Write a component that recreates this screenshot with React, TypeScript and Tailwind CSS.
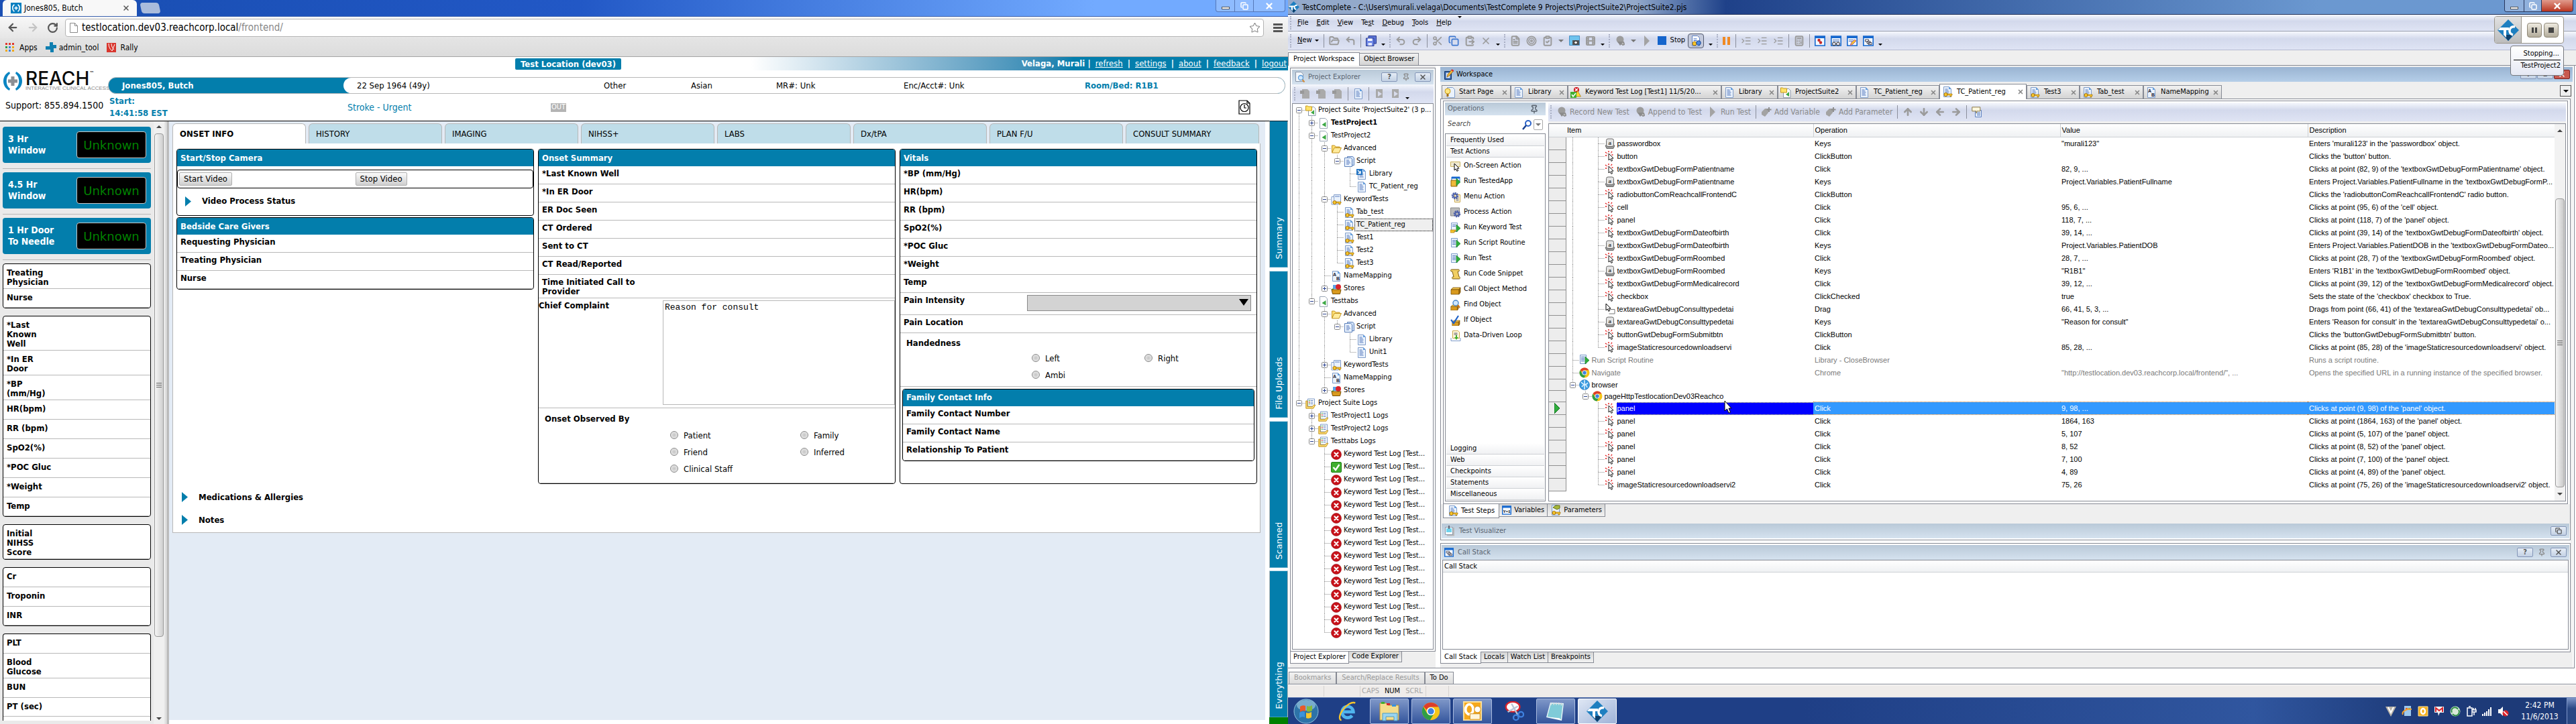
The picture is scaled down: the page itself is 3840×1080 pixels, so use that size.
import type { ReactNode } from "react";
import {
  ArrowDown, ArrowLeft, ArrowRight, ArrowUp, Calculator, ClipboardCheck, ClipboardPaste, Copy, CornerUpLeft, Film,
  FileText, FolderOpen, IndentIncrease, Pin, Redo2, RotateCw, Scissors, Star, Target, Undo2, X,
} from "lucide-react";

/* ---------- icons ---------- */

const page = (
  <>
    <path d="M2.5.5h8l3 3v12h-11z" fill="#eaf2fc" stroke="#7f9cc9" />
    <path d="M10 .5v3.5h3.5z" fill="#5b9be0" />
  </>
);
const lines = <path d="M4.5 4h4M4.5 6h5M4.5 8h6M4.5 10h5M4.5 12h6" stroke="#5c7fc0" />;
const key = (
  <>
    <circle cx="5.5" cy="12" r="2.6" fill="#f6c52c" stroke="#a87408" />
    <path d="M8 11h7v2h-1v2h-2v-2H8z" fill="#f6c52c" stroke="#a87408" strokeWidth=".7" />
  </>
);
const green = <path d="M9 3l6 5.5L9 14z" fill="#2fae3c" stroke="#0f7a1c" strokeWidth=".7" />;
const box = (
  <>
    <path d="M1 8l3-3h11l-2 3z" fill="#f4c64e" stroke="#7a5208" strokeWidth=".8" />
    <path d="M1 8h12v7H1z" fill="#d99a1e" stroke="#7a5208" strokeWidth=".8" />
    <path d="M13 8l2-3v7l-2 3z" fill="#a86f10" stroke="#7a5208" strokeWidth=".8" />
  </>
);
const gear = (
  <>
    <circle cx="7" cy="6" r="4" fill="none" stroke="#4a5ea8" strokeWidth="2.5" strokeDasharray="2 1" />
    <circle cx="7" cy="6" r="2.6" fill="none" stroke="#4a5ea8" strokeWidth="1.6" />
  </>
);
const blueWin = (
  <>
    <path d="M.8 1h14.4v14H.8z" fill="#f4f9ff" stroke="#1668cf" strokeWidth="1.6" />
    <path d="M.5 1h15v3H.5z" fill="#1668cf" />
  </>
);
const cursorArrow = "M6 4v10l2.3-2 1.6 3.4 1.8-.9-1.6-3.2 3-.3z";

const glyphs: Record<string, ReactNode> = {
  doc: <>{page}{lines}</>,
  key: <>{page}{lines}{key}</>,
  keys: <><path d="M1 3.5h10V15H1z" fill="#fff" stroke="#7f9cc9" /><path d="M4.5.5h10v12h-10z" fill="#eaf2fc" stroke="#7f9cc9" /><path d="M6 3h7" stroke="#5c7fc0" />{key}</>,
  script: <><path d="M5.5.5h8l2 2v11h-10z" fill="#cfe0f6" stroke="#5f82bb" /><path d="M1.5 2.5h9l2 2v11h-11z" fill="#eaf2fc" stroke="#5f82bb" /><path d="M4 6h4M4 8h5M4 10h6M4 12h4" stroke="#5c7fc0" /></>,
  lib: <>{page}{lines}<path d="M0 0h9v9H0z" fill="#2273c2" /><path d="M2 2l4 4M6 3v3.5H2.5" stroke="#fff" strokeWidth="1.3" /></>,
  project: <><path d="M2.5.5h8l3 3v12h-11z" fill="#fff" stroke="#9aa5b5" /><path d="M11.5 6v7.5l-6-3.5z" fill="#3da845" /></>,
  suite: <><path d="M4.5 2.5h8l2.5 2.5v10.5H4.5z" fill="#fff" stroke="#8a97aa" /><path d="M13 7v7l-5-3z" fill="#3da845" /><path d="M.5 1h3l1 1h5v6h-9z" fill="#ffe36a" stroke="#c69a1a" /></>,
  folder: <><path d="M1.5 13.5V3h4l1.5 2h6v2" fill="#ffdf75" stroke="#c29422" /><path d="M1.5 14L5 6.5h10.5L12 14z" fill="#ffeb9c" stroke="#c29422" /></>,
  nm: <>{page}<text x="3" y="8" fontSize="7" fontWeight="700" fill="#223" fontFamily="Liberation Sans">A</text><text x="8" y="14" fontSize="7" fontWeight="700" fill="#223" fontFamily="Liberation Sans">B</text></>,
  store: <><path d="M3 2h8v6H3z" fill="#5ca2e8" /><circle cx="11" cy="5" r="4" fill="#d9232b" /><path d="M0 9h4V7l-3 1z" fill="#4ab04f" /><path d="M1 9h14l-1.5 6.5h-11z" fill="#d99a1e" stroke="#7a5208" /></>,
  logs: <><path d="M3.5 1h10v11h-10z" fill="#fff" stroke="#7f9cc9" /><path d="M7.5 3.5h4M7.5 6h4M7.5 8.5h4" stroke="#5c7fc0" /><path d="M5 3.5h1.5M5 8.5h1.5" stroke="#3da845" strokeWidth="1.5" /><path d="M5 6h1.5" stroke="#d9232b" strokeWidth="1.5" /><path d="M.8 4v11.2h11l3-5h-2.5l-2 2.5H3V4z" fill="#ffe07a" stroke="#c29422" /></>,
  err: <><circle cx="8" cy="8" r="7.5" fill="#c8121a" stroke="#8f0a10" strokeWidth=".6" /><path d="M5.5 5.5l5 5M10.500 5.500l-5 5" stroke="#fff" strokeWidth="2.2" strokeLinecap="round" /></>,
  ok: <><rect x=".5" y=".5" width="15" height="15" rx="1.5" fill="#3fae2e" stroke="#1f7f14" /><path d="M3.5 8l3.5 4 5.5-8" stroke="#fff" strokeWidth="2.4" /></>,
  logTab: <><circle cx="9" cy="4" r="4" fill="#d1131c" /><path d="M7 2l4 4M11 2L7 6" stroke="#fff" strokeWidth="1.4" /><path d="M10.5 5l5 9h-8z" fill="#ffd92e" stroke="#a87408" strokeWidth=".7" /><path d="M0 7h9v9H0z" fill="#3fae2e" /><path d="M2 11l2 3 4-5" stroke="#fff" strokeWidth="1.6" /></>,
  bulb: <><path d="M4.5.5h8l3 3v12h-11z" fill="#eaf2fc" stroke="#7f9cc9" /><circle cx="5" cy="6" r="4" fill="#ffe680" stroke="#c69a1a" /><path d="M3.5 10h3v4h-3z" fill="#a86f10" /></>,
  keycap: <><path d="M1 11l2 4.500h10l2-4.500z" fill="#9a9a9a" stroke="#6b6b6b" /><rect x="2.5" y="1" width="11" height="11.500" rx="2.500" fill="#e4e4e4" stroke="#6b6b6b" /><text x="5.5" y="10" fontSize="9" fontWeight="700" fill="#444" fontFamily="Liberation Serif">a</text></>,
  click: <><path d="M1 2l3 2M6 0v3M11 1L9 3.500M1 7h3M10.500 6H13" stroke="#e01b1b" strokeWidth="1.4" strokeDasharray="2 .8" /><path d={cursorArrow} fill="#fff" stroke="#000" strokeWidth=".9" /></>,
  drag: <><path d="M8 8.5h7V15H6.500" fill="#fff" stroke="#777" /><path d="M2 0v10l2.300-2 1.600 3.400 1.800-.9-1.600-3.200 3-.3z" fill="#fff" stroke="#000" /></>,
  runDoc: <><path d="M1.5.5h9v13h-9z" fill="#eaf2fc" stroke="#7f9cc9" /><path d="M3 3.5h5M3 5.5h5M3 7.5h5M3 9.5h5" stroke="#5c7fc0" />{green}</>,
  runKey: <><path d="M1.5.5h9v13h-9z" fill="#eaf2fc" stroke="#7f9cc9" /><path d="M3 3.5h5M3 5.5h5" stroke="#5c7fc0" />{green}<path d="M0 11h8v2H6v2H0z" fill="#f6c52c" stroke="#a87408" strokeWidth=".7" /></>,
  screen: <><path d="M.5 1.5h14v7H.5z" fill="#efe9d0" stroke="#c9b25c" /><path d={cursorArrow} fill="#fff" stroke="#000" /></>,
  app: <><path d="M2 1h12v6H2z" fill="#fff" stroke="#1668cf" /><path d="M2 1h12v2.5H2z" fill="#1668cf" /><path d="M1 6h9v9H1z" fill="#f0b93a" stroke="#8f6208" />{green}</>,
  menu: <><path d="M6.5 4.5h8v11h-8z" fill="#fff8de" stroke="#c9a64a" /><path d="M8.5 9h4M8.5 11h4M8.5 13h4" stroke="#667" />{gear}</>,
  process: <><path d="M.5 1h13v12H.5z" fill="#bbb" stroke="#888" /><g transform="translate(3 4)">{gear}</g></>,
  snippet: <path d="M2 1h10c2 0 2 3 0 3h-1l2 8c2 0 2 3 0 3H4c-2 0-2-3 0-3h1L3 4H2C0 4 0 1 2 1z" fill="#f1cf62" stroke="#7a5a10" />,
  box,
  find: <><g transform="translate(0 4) scale(.8)">{box}</g><circle cx="8" cy="5" r="4" fill="#cfe8ff" stroke="#4b87c9" strokeWidth="1.4" /><path d="M11 8l3 4" stroke="#c9761a" strokeWidth="2.2" /></>,
  ifobj: <><g transform="translate(2 4) scale(.8)">{box}</g><path d="M1 7l4 5 7-11" stroke="#1f62c8" strokeWidth="2.2" /></>,
  loop: <><path d="M3.5.5h8l2 2v9h-10z" fill="#fff8de" stroke="#c9a64a" /><path d="M5.5 4h5M5.5 6h5" stroke="#556" /><path d="M1 11v4.500h14V11" stroke="#7f9cc9" /><path d="M8 7v3H6l3 4 3-4h-2V7z" fill="#3fae2e" /></>,
  chrome: <><circle cx="8" cy="8" r="7.5" fill="#f5c518" /><path d="M8 .5a7.500 7.500 0 016.500 3.800H8a3.700 3.700 0 00-3.500 2.500L1.700 4A7.500 7.500 0 018 .5z" fill="#dd3d2c" /><path d="M1.500 4.200A7.500 7.500 0 007.300 15.500l3-5A3.600 3.600 0 014.700 9.600z" fill="#2f9e46" /><circle cx="8" cy="8" r="3.5" fill="#fff" /><circle cx="8" cy="8" r="2.7" fill="#3f82e0" /></>,
  globe: <><circle cx="8" cy="8" r="7.5" fill="#3a9be0" stroke="#1a62a8" strokeWidth=".6" /><path d="M3 4c3 4 7 5 10 1M4 11c3-4 6-5 8 1M8 1v14" stroke="#dff1ff" strokeWidth="1.5" /></>,
  camera: <><path d="M.5.5h15v14H.5z" fill="#6ec3ee" stroke="#4a90c4" /><path d="M5 7h10v7H5z" fill="#555" /><circle cx="10" cy="10.5" r="2.5" fill="#eee" stroke="#222" /></>,
  save: <><path d="M4 .5h11.500V12H4z" fill="#5b74d6" stroke="#28388f" /><path d="M.5 4H12v11.500H.5z" fill="#6f88e6" stroke="#28388f" /><path d="M3 4.500h6.500V8H3z" fill="#fff" /><path d="M3.500 11H9v4H3.500z" fill="#dfe6ff" /></>,
  toggle: <><path d="M2.5.5h8l3 3v12h-11z" fill="#fff" stroke="#5c7fc0" /><path d="M4.500 5h5M4.500 7.500h5" stroke="#2a62c8" /><circle cx="6" cy="12" r="3" fill="#f6c52c" stroke="#a87408" /><circle cx="12" cy="11" r="3.3" fill="#4a86dc" stroke="#1e4a94" /></>,
  winRed: <>{blueWin}<circle cx="6.5" cy="7" r="2.2" fill="#c62828" /><circle cx="9" cy="10.500" r="2.200" fill="#c62828" /></>,
  winBin: <>{blueWin}<path d="M3 6.500h10M3 8.500h10" stroke="#5c7fc0" /><circle cx="5" cy="12.500" r="2.500" fill="#dde" stroke="#222" /><circle cx="11" cy="12.500" r="2.500" fill="#dde" stroke="#222" /></>,
  winPen: <>{blueWin}<path d="M3 6.500h7M3 8.500h5" stroke="#5c7fc0" /><path d="M5 15l2-5 5-4 2 2-5 5z" fill="#f6c52c" stroke="#a85a98" /></>,
  winStack: <>{blueWin}<path d="M3.500 6h5v3h-5zM6 8.500h5v3H6zM8 10.500h5v3H8z" fill="#fff" stroke="#445" /></>,
  y1: <>{blueWin}<text x="2" y="12" fontSize="7" fontWeight="700" fill="#000" fontFamily="Liberation Mono">Y=1</text></>,
  param: <>{page}{key}<path d="M4 4l4-3h6v4l-4 2z" fill="#a8b83a" stroke="#667014" /></>,
  pen: <><path d="M2.500 3.500h10v12h-10z" fill="#2f5fa8" stroke="#173769" /><path d="M4.500 5.500h6v8h-6z" fill="#dfe9f8" /><path d="M6 12l1-4 6-7 2.500 2-6 7z" fill="#f0b93a" stroke="#7a4a08" strokeWidth=".7" /><path d="M13 1l2.500 2" stroke="#d9232b" strokeWidth="2" /></>,
  explorer: <><path d="M1.500.5h8l3 3v11h-11z" fill="#f4f7fb" stroke="#8a97aa" /><circle cx="9" cy="9" r="3.500" fill="#cfe8ff" stroke="#5b9bd8" strokeWidth="1.300" /><path d="M11.500 12l3 3.500" stroke="#d08a3a" strokeWidth="2" /></>,
  visual: <><path d="M4 3h11v12.500H4z" fill="#b9b9b9" /><path d="M1.500 2.500h11v11h-11z" fill="#fff" stroke="#8a97aa" /><path d="M3 4h8v6H3z" fill="#6fd3ee" /><path d="M7 0v5" stroke="#445" strokeWidth="1.500" /></>,
  note: <><path d="M5.500 5.500h9v10h-9z" fill="#eaf2fc" stroke="#5c7fc0" /><path d="M8 9h5M8 11h5M8 13h5" stroke="#5c7fc0" /><path d="M.8.8h12v6H8L7 10V6.800H.8z" fill="#fff8de" stroke="#8a7a4a" /></>,
  rec: <><circle cx="8" cy="6" r="5.500" fill="#9c9c9c" /><path d="M4 9h10l1 5-3 1-2-2-2 2z" fill="#8b8b8b" /><circle cx="12" cy="12" r="2" fill="#b9b9b9" stroke="#888" /></>,
  tag: <><path d="M1 8l5-5h5v6l-5 6-5-3z" fill="#a3a3a3" /><path d="M12 1v7M8.500 4.500h7" stroke="#8f8f8f" strokeWidth="2" /></>,
  play: <path d="M4 0l8 8-8 8z" fill="#a3a3a3" />,
  stopDoc: <><path d="M3 1h10v13H3z" fill="#a9a9a9" /><path d="M6 4l6 4-6 4z" fill="#d8dcec" /></>,
  docGray: <><path d="M3 1h8l3 3v11H3z" fill="#aaa" /><path d="M0 3h6v5H0z" fill="#999" /></>,
};

function Ic({ k, s = "size-4" }: { k: string; s?: string }) {
  return (
    <svg viewBox="0 0 16 16" fill="none" className={`${s} shrink-0`} aria-hidden="true">
      {glyphs[k]}
    </svg>
  );
}

function TcLogo({ s }: { s: string }) {
  return (
    <svg viewBox="0 0 32 32" className={`${s} shrink-0`} aria-hidden="true">
      <path d="M16 0l16 16-16 16L0 16z" fill="#1e7fc0" />
      <path d="M9 23h14l-7 9z" fill="#0d3f6b" />
      <path d="M4 12h13v4h-4v11l-4-4v-7H1z" fill="#fff" />
      <path d="M26 11c-9-2-11 10-3 12" fill="none" stroke="#fff" strokeWidth="3.5" />
    </svg>
  );
}

function ReachMark({ s }: { s: string }) {
  return (
    <svg viewBox="0 0 30 30" className={`${s} shrink-0`} aria-hidden="true">
      <path d="M10 1C-2 6-2 24 10 29l1-3C4 22 4 8 11 4zM20 1c12 5 12 23 0 28l-1-3c7-4 7-18 0-22z" fill="#0a85c2" />
      <path d="M12.5 8h5v4.500H22v5h-4.500V22h-5v-4.500H8v-5h4.500z" fill="#8b8f94" />
    </svg>
  );
}

const g = "size-4 shrink-0 text-[#9b9b9b]";

/* ---------- REACH web application ---------- */

function CareCard({ a, b }: { a: string; b: string }) {
  return (
    <div className="border-b border-[#b8b8b8] pb-2">
      <div className="flex h-[54px] items-center justify-between rounded-sm bg-[#037eac] pr-[7px] pl-2">
        <div className="text-[14px] leading-[17px] font-bold text-white">{a}<br />{b}</div>
        <div className="flex h-10 w-[104px] items-center justify-center rounded border border-[#c8c8c8] bg-black font-['DejaVu_Sans',sans-serif] text-[18px] text-[#008000]">
          Unknown
        </div>
      </div>
    </div>
  );
}

function Group({ rows, open }: { rows: string[]; open?: boolean }) {
  return (
    <ul className={`overflow-hidden border-black bg-white ${open ? "rounded-t border-x border-t pb-1.5" : "rounded border"}`}>
      {rows.map((r) => (
        <li key={r} className="min-h-[29px] border-b border-[#b8b8b8] pt-1.5 pb-0.5 pl-[5px] leading-[14px] font-bold whitespace-pre-line last:min-h-7">
          {r}
        </li>
      ))}
    </ul>
  );
}

function Box({ title, children, className = "" }: { title: string; children: ReactNode; className?: string }) {
  return (
    <section className={`overflow-hidden rounded border border-black bg-white ${className}`}>
      <h2 className="flex h-[25px] items-center bg-[#037eac] pl-[5px] font-bold text-white">{title}</h2>
      {children}
    </section>
  );
}

function Field({ children }: { children: ReactNode }) {
  return (
    <div className="min-h-[27px] border-b border-[#b8b8b8] pt-1 pb-0.5 pl-[5px] leading-[14px] font-bold">
      <div className="max-w-[160px]">{children}</div>
    </div>
  );
}

function Radio({ name, label }: { name: string; label: string }) {
  return (
    <label className="flex items-center gap-2 text-[13px] leading-[25px]">
      <input type="radio" name={name} className="size-3 appearance-none rounded-full border border-[#8a8a8a] bg-radial from-[#c4c4c4] to-[#f4f4f4]" />
      {label}
    </label>
  );
}

function Disclosure({ children }: { children: ReactNode }) {
  return (
    <button className="flex items-center gap-4 leading-5 font-bold">
      <svg viewBox="0 0 9 15" className="h-[15px] w-[9px]" aria-hidden="true"><path d="M0 0l9 7.500L0 15z" fill="#037eac" /></svg>
      {children}
    </button>
  );
}

const chromeBtn = "flex h-[17px] items-center justify-center border-r border-[#5678b8] last:border-r-0";
const videoBtn = "h-5 rounded-xs border border-[#b0b0b0] bg-linear-to-b from-[#fafafa] to-[#cfcfcf] px-1.5 text-[13px] leading-[18px]";
const tabsLeft = ["HISTORY", "IMAGING", "NIHSS+", "LABS", "Dx/tPA", "PLAN F/U", "CONSULT SUMMARY"];

function Browser() {
  return (
    <div className="flex min-h-screen min-w-0 flex-1 flex-col overflow-hidden bg-white font-['DejaVu_Sans_Condensed','DejaVu_Sans',sans-serif] text-[13px] text-black">
      {/* title strip */}
      <div className="flex h-[25px] items-end border-b border-[#3c62ae] bg-linear-to-r from-[#1a4fb4] from-10% via-[#2258c6] via-45% to-[#72aaff] to-85%">
        <div className="ml-1 flex h-6 w-[200px] items-center rounded-t-md bg-[#f8f8f8] pl-3">
          <span className="flex size-4 items-center justify-center bg-[#0a7fc0]">
            <svg viewBox="0 0 16 16" className="size-3.5" fill="none" stroke="#fff" strokeWidth="1.8" aria-hidden="true"><path d="M5 2C1 5 1 11 5 14M11 2c4 3 4 9 0 12M8 5v6M5 8h6" /></svg>
          </span>
          <span className="ml-1 flex-1 text-[12px]">Jones805, Butch</span>
          <button aria-label="Close tab" className="mr-2.5"><X className="size-3 text-[#555]" strokeWidth={3} /></button>
        </div>
        <button aria-label="New tab" className="mb-1 ml-1.5 h-4 w-7 skew-x-12 rounded-sm bg-[#a9bbdc]" />
        <div className="mr-1 ml-auto flex self-start rounded-b border border-t-0 border-[#5678b8] bg-white/20">
          <button aria-label="Minimize" className={`${chromeBtn} w-7`}><i className="mt-1.5 h-1 w-3 border border-[#555] bg-white" /></button>
          <button aria-label="Restore" className={`${chromeBtn} w-7`}><Copy className="size-3 text-white" strokeWidth={3} /></button>
          <button aria-label="Close" className={`${chromeBtn} w-[46px]`}><X className="size-3.5 text-white" strokeWidth={4} /></button>
        </div>
      </div>
      {/* address bar */}
      <div className="flex h-8 items-center bg-linear-to-b from-[#f8f8f8] to-[#e6e6e6] pl-2.5">
        <button aria-label="Back" className="mr-3"><ArrowLeft className="size-[18px] text-[#555]" strokeWidth={3} /></button>
        <button aria-label="Forward" className="mr-3"><ArrowRight className="size-[18px] text-[#c4c4c4]" strokeWidth={3} /></button>
        <button aria-label="Reload" className="mr-2.5"><RotateCw className="size-[17px] text-[#555]" strokeWidth={3} /></button>
        <div className="flex h-[27px] flex-1 items-center rounded-sm border border-[#b4b4b4] bg-white pr-1 pl-1.5">
          <svg viewBox="0 0 12 15" className="mr-1.5 h-[15px] w-3" fill="#fff" stroke="#8a8a8a" aria-hidden="true"><path d="M.5.5h7l4 4v10H.5zM7.500.5v4h4" /></svg>
          <span className="flex-1 text-[15px]">testlocation.dev03.reachcorp.local<span className="text-[#888]">/frontend/</span></span>
          <Star className="size-[17px] text-[#888]" strokeWidth={1.5} />
        </div>
        <button aria-label="Menu" className="mr-2 ml-3.5 flex flex-col gap-0.5"><i className="h-[3px] w-3.5 bg-[#555]" /><i className="h-[3px] w-3.5 bg-[#555]" /><i className="h-[3px] w-3.5 bg-[#555]" /></button>
      </div>
      {/* bookmarks */}
      <div className="flex h-7 items-center border-b border-[#a5a5a5] bg-linear-to-b from-[#e4e4e4] to-[#dcdcdc] pl-2 text-[12px]">
        <svg viewBox="0 0 13 13" className="mr-2 size-[13px]" aria-hidden="true">
          <path d="M0 0h3v3H0zM5 0h3v3H5zM10 0h3v3h-3z" fill="#e0382c" /><path d="M0 5h3v3H0z" fill="#2f9e46" /><path d="M5 5h3v3H5zM5 10h3v3H5z" fill="#3f82e0" /><path d="M10 5h3v3h-3zM10 10h3v3h-3zM0 10h3v3H0z" fill="#f0a818" />
        </svg>
        <a href="#apps" className="mr-3">Apps</a>
        <svg viewBox="0 0 16 16" className="mr-1 size-4" aria-hidden="true"><path d="M6 0h5v4h5v5h-4v6H7v-4H0V6h6z" fill="#0f7fb0" /></svg>
        <a href="#admin" className="mr-3">admin_tool</a>
        <svg viewBox="0 0 14 14" className="mr-1.5 size-3.5" aria-hidden="true"><path d="M0 0h14v14H0z" fill="#d8362e" /><path d="M3 1c0 6 3 9 5 11M7 1c0 4 2 7 4 9M8 12l4-10" stroke="#fff" fill="none" /></svg>
        <a href="#rally">Rally</a>
      </div>
      {/* app header */}
      <header className="flex flex-col border-b border-black">
        <div className="flex h-5 items-center pl-[40%]">
          <div className="rounded-xs bg-[#037eac] px-2 leading-[17px] font-bold text-white">Test Location (dev03)</div>
          <nav className="ml-auto flex h-5 w-[800px] items-center justify-end gap-[7px] bg-linear-to-r from-white to-[#037eac] to-60% pr-0.5 text-[13px] text-white">
            <b>Velaga, Murali |</b>
            <a href="#refresh" className="underline">refresh</a><b>|</b>
            <a href="#settings" className="underline">settings</a><b>|</b>
            <a href="#about" className="underline">about</a><b>|</b>
            <a href="#feedback" className="underline">feedback</a><b>|</b>
            <a href="#logout" className="underline">logout</a>
          </nav>
        </div>
        <div className="flex h-[75px]">
          <div className="w-[161px] shrink-0 pl-1">
            <div className="flex h-8 items-center gap-1">
              <ReachMark s="size-[30px]" />
              <div>
                <div className="flex text-[#0b0b0b]"><span className="font-['Inter',sans-serif] text-[28px] leading-[22px] font-medium">REACH</span><span className="text-[8px] leading-[8px]">™</span></div>
                <div className="font-['Liberation_Sans',sans-serif] text-[8px] leading-[8px] whitespace-nowrap text-[#888]">INTERACTIVE CLINICAL ACCESS</div>
              </div>
            </div>
            <div className="mt-2.5 pl-1 text-[14px] whitespace-nowrap">Support: 855.894.1500</div>
          </div>
          <div className="flex-1 pt-2.5 pr-1 text-[14px]">
            <div className="flex h-[25px] overflow-hidden rounded-xl border border-[#b8b8b8] bg-[#037eac]">
              <div className="w-[350px] self-center pl-5 text-[13px] font-bold text-white">Jones805, Butch</div>
              <div className="flex flex-1 items-center rounded-l-xl bg-white pl-5 text-[13px]">
                <span className="w-[368px]">22 Sep 1964 (49y)</span>
                <span className="w-[130px]">Other</span>
                <span className="w-[127px]">Asian</span>
                <span className="w-[190px]">MR#: Unk</span>
                <span className="w-[270px]">Enc/Acct#: Unk</span>
                <b className="text-[#037eac]">Room/Bed: R1B1</b>
              </div>
            </div>
            <div className="flex h-10 items-center text-[13px] text-[#037eac]">
              <b className="w-[357px] pl-0.5 leading-[18px]">Start:<br />14:41:58 EST</b>
              <span className="w-[303px] text-[14px]">Stroke - Urgent</span>
              <span className="flex h-[13px] w-[23px] items-center justify-center bg-[#b4b4b4] text-[11px] text-white">OUT</span>
              <button aria-label="History" className="mr-[52px] ml-auto">
                <svg viewBox="0 0 18 22" className="h-[22px] w-[18px]" fill="none" stroke="#000" strokeWidth="1.2" aria-hidden="true"><path d="M1 1h12l4 4v16H1zM13 1v4h4" /><circle cx="9" cy="11.5" r="6" /><path d="M9 7v5h3" /></svg>
              </button>
            </div>
          </div>
        </div>
      </header>
      {/* body */}
      <div className="flex flex-1">
        <aside className="flex w-[246px] shrink-0 bg-[#eaeaea]">
          <div className="flex w-[229px] flex-col gap-[5px] pt-2 pr-1 pl-1">
            <CareCard a="3 Hr" b="Window" />
            <CareCard a="4.5 Hr" b="Window" />
            <CareCard a="1 Hr Door" b="To Needle" />
            <div className="flex flex-col gap-[11px]">
              <Group rows={["Treating\nPhysician", "Nurse"]} />
              <Group rows={["*Last\nKnown\nWell", "*In ER\nDoor", "*BP\n(mm/Hg)", "HR(bpm)", "RR (bpm)", "SpO2(%)", "*POC Gluc", "*Weight", "Temp"]} />
              <Group rows={["Initial\nNIHSS\nScore"]} />
              <Group rows={["Cr", "Troponin", "INR"]} />
              <Group open rows={["PLT", "Blood\nGlucose", "BUN", "PT (sec)"]} />
            </div>
          </div>
          <div className="flex w-4 flex-col items-center bg-[#f0f0f0] py-1.5">
            <i className="border-x-4 border-b-4 border-x-transparent border-b-[#444]" />
            <div className="mt-2 flex h-[751px] w-3.5 flex-col items-center justify-center gap-0.5 rounded-sm border border-[#9a9a9a] bg-linear-to-r from-[#f6f6f6] to-[#cfcfcf]">
              <i className="h-px w-2 bg-[#666]" /><i className="h-px w-2 bg-[#666]" /><i className="h-px w-2 bg-[#666]" />
            </div>
            <i className="mt-auto border-x-4 border-t-4 border-x-transparent border-t-[#444]" />
          </div>
        </aside>
        <div className="w-1.5 shrink-0 border-r-4 border-l border-[#bdbdbd] border-l-[#ccc]" />
        <main className="mb-1.5 min-w-0 flex-1 bg-[#e3ebf5] pr-[7px] pl-[5px]">
          <div className="mt-[3px] mr-0.5 grid grid-cols-8 gap-1" role="tablist">
            <button role="tab" aria-selected="true" className="h-[30px] rounded-t-md border border-b-0 border-[#b8b8b8] bg-white pl-2.5 text-left text-[13px] font-bold">ONSET INFO</button>
            {tabsLeft.map((t) => (
              <button role="tab" key={t} className="h-[30px] rounded-t-md border border-b-0 border-[#b8b8b8] bg-[#bfdde9] pl-2.5 text-left text-[13px]">{t}</button>
            ))}
          </div>
          <div className="border border-t-0 border-[#b8b8b8] bg-white pt-2 pr-1 pl-[5px]">
            <div className="grid grid-cols-3 gap-1.5">
              <div className="flex flex-col gap-0.5">
                <Box title="Start/Stop Camera">
                  <div className="mt-[5px] grid h-7 grid-cols-2 items-center rounded border border-black px-0.5">
                    <div><button className={videoBtn}>Start Video</button></div>
                    <div><button className={videoBtn}>Stop Video</button></div>
                  </div>
                  <div className="flex h-10 items-center pb-0.5 pl-3"><Disclosure>Video Process Status</Disclosure></div>
                </Box>
                <Box title="Bedside Care Givers">
                  <Field>Requesting Physician</Field><Field>Treating Physician</Field><Field>Nurse</Field>
                </Box>
              </div>
              <Box title="Onset Summary">
                {["*Last Known Well", "*In ER Door", "ER Doc Seen", "CT Ordered", "Sent to CT", "CT Read/Reported"].map((f) => <Field key={f}>{f}</Field>)}
                <Field>Time Initiated Call to Provider</Field>
                <div className="flex h-[164px] border-b border-[#b8b8b8] pt-[3px]">
                  <label htmlFor="complaint" className="w-[185px] leading-4 font-bold">Chief Complaint</label>
                  <textarea id="complaint" defaultValue="Reason for consult" className="h-[156px] flex-1 resize-none border border-[#b8b8b8] px-0.5 py-0.5 font-['Liberation_Mono',monospace] text-[13px] leading-4" />
                </div>
                <fieldset className="border-b border-[#b8b8b8] pb-2">
                  <legend className="pt-1.5 pl-[9px] font-bold">Onset Observed By</legend>
                  <div className="grid grid-cols-[194px_1fr] pt-0.5 pl-[196px]">
                    <Radio name="observed" label="Patient" /><Radio name="observed" label="Family" />
                    <Radio name="observed" label="Friend" /><Radio name="observed" label="Inferred" />
                    <Radio name="observed" label="Clinical Staff" />
                  </div>
                </fieldset>
              </Box>
              <Box title="Vitals">
                {["*BP (mm/Hg)", "HR(bpm)", "RR (bpm)", "SpO2(%)", "*POC Gluc", "*Weight", "Temp"].map((f) => <Field key={f}>{f}</Field>)}
                <div className="flex h-[33px] border-b border-[#b8b8b8] pt-[3px] pl-[5px]">
                  <label htmlFor="pain" className="w-[184px] leading-4 font-bold">Pain Intensity</label>
                  <div className="relative mr-2 h-6 flex-1">
                    <select id="pain" className="h-6 w-full appearance-none border border-[#8a8a8a] bg-[#d3d3d3]"><option aria-label="none" /></select>
                    <svg viewBox="0 0 14 10" className="pointer-events-none absolute top-1.5 right-1 h-2.5 w-3.5" aria-hidden="true"><path d="M0 0h14L7 10z" /></svg>
                  </div>
                </div>
                <Field>Pain Location</Field>
                <fieldset className="border-b border-[#b8b8b8] pb-1">
                  <legend className="pt-[5px] pl-[9px] font-bold">Handedness</legend>
                  <div className="grid grid-cols-[168px_1fr] pl-[196px]">
                    <Radio name="hand" label="Left" /><Radio name="hand" label="Right" /><Radio name="hand" label="Ambi" />
                  </div>
                </fieldset>
                <Box title="Family Contact Info" className="mx-[3px] mt-[3px]">
                  <Field>Family Contact Number</Field><Field>Family Contact Name</Field><Field>Relationship To Patient</Field>
                </Box>
              </Box>
            </div>
            <div className="flex flex-col gap-3.5 pt-2.5 pb-2 pl-2">
              <Disclosure>Medications &amp; Allergies</Disclosure>
              <Disclosure>Notes</Disclosure>
            </div>
          </div>
        </main>
        <nav className="ml-1.5 flex w-7 shrink-0 flex-col gap-1.5">
          {["Summary", "File Uploads", "Scanned", "Everything"].map((t) => (
            <button key={t} className="flex flex-1 rotate-180 justify-center border-y border-[#b8b8b8] bg-[#037eac] pt-3 pr-1 text-left font-['DejaVu_Sans',sans-serif] text-[13px] text-white [writing-mode:vertical-rl]">
              <span className="flex-1">{t}</span>
            </button>
          ))}
          <div className="-mt-1.5 h-2.5 bg-[#008000]" />
        </nav>
      </div>
    </div>
  );
}

/* ---------- TestComplete ---------- */

type Node = { l: number; x?: "+" | "-"; i: string; t: string; b?: boolean; sel?: boolean; dim?: boolean };

function continues(nodes: Node[], at: number, level: number) {
  for (let n = at + 1; n < nodes.length; n++) {
    if (nodes[n].l < level) return false;
    if (nodes[n].l === level) return true;
  }
  return false;
}

function Guides({ nodes, at, h = 19, top = true }: { nodes: Node[]; at: number; h?: number; top?: boolean }) {
  const node = nodes[at];
  const mid = h === 19 ? 9.5 : 8.5;
  return (
    <>
      {Array.from({ length: node.l + 1 }, (_, c) => {
        const own = c === node.l;
        const down = continues(nodes, at, c);
        return (
          <svg key={c} width="19" height={h} className="shrink-0" aria-hidden="true">
            <g stroke="#8a8a8a" strokeDasharray="1 1">
              {own && (top || at > 0) && <path d={`M9.5 0V${mid}`} />}
              {down && <path d={`M9.5 ${own ? mid : 0}V${h}`} />}
              {own && <path d={`M9.5 ${mid}H19`} />}
            </g>
            {own && node.x && (
              <g transform={`translate(5 ${mid - 4.5})`}>
                <rect x=".5" y=".5" width="8" height="8" rx="1" fill="#fff" stroke="#8a8a8a" />
                <path d={node.x === "+" ? "M2 4.5h5M4.5 2v5" : "M2 4.5h5"} stroke="#28408f" />
              </g>
            )}
          </svg>
        );
      })}
    </>
  );
}

const tree: Node[] = [
  { l: 0, x: "-", i: "suite", t: "Project Suite 'ProjectSuite2' (3 p..." },
  { l: 1, x: "+", i: "project", t: "TestProject1", b: true },
  { l: 1, x: "-", i: "project", t: "TestProject2" },
  { l: 2, x: "-", i: "folder", t: "Advanced" },
  { l: 3, x: "-", i: "script", t: "Script" },
  { l: 4, i: "lib", t: "Library" },
  { l: 4, i: "doc", t: "TC_Patient_reg" },
  { l: 2, x: "-", i: "keys", t: "KeywordTests" },
  { l: 3, i: "key", t: "Tab_test" },
  { l: 3, i: "key", t: "TC_Patient_reg", sel: true },
  { l: 3, i: "key", t: "Test1" },
  { l: 3, i: "key", t: "Test2" },
  { l: 3, i: "key", t: "Test3" },
  { l: 2, i: "nm", t: "NameMapping" },
  { l: 2, x: "+", i: "store", t: "Stores" },
  { l: 1, x: "-", i: "project", t: "Testtabs" },
  { l: 2, x: "-", i: "folder", t: "Advanced" },
  { l: 3, x: "-", i: "script", t: "Script" },
  { l: 4, i: "doc", t: "Library" },
  { l: 4, i: "doc", t: "Unit1" },
  { l: 2, x: "+", i: "keys", t: "KeywordTests" },
  { l: 2, i: "nm", t: "NameMapping" },
  { l: 2, x: "+", i: "store", t: "Stores" },
  { l: 0, x: "-", i: "logs", t: "Project Suite Logs" },
  { l: 1, x: "+", i: "logs", t: "TestProject1 Logs" },
  { l: 1, x: "+", i: "logs", t: "TestProject2 Logs" },
  { l: 1, x: "-", i: "logs", t: "Testtabs Logs" },
  ...Array.from({ length: 15 }, (_, n): Node => ({ l: 2, i: n === 1 ? "ok" : "err", t: "Keyword Test Log [Test..." })),
];

type Step = Node & { op?: string; v?: string; d?: string };
const steps: Step[] = [
  { l: 2, i: "keycap", t: "passwordbox", op: "Keys", v: "\"murali123\"", d: "Enters 'murali123' in the 'passwordbox' object." },
  { l: 2, i: "click", t: "button", op: "ClickButton", d: "Clicks the 'button' button." },
  { l: 2, i: "click", t: "textboxGwtDebugFormPatientname", op: "Click", v: "82, 9, ...", d: "Clicks at point (82, 9) of the 'textboxGwtDebugFormPatientname' object." },
  { l: 2, i: "keycap", t: "textboxGwtDebugFormPatientname", op: "Keys", v: "Project.Variables.PatientFullname", d: "Enters Project.Variables.PatientFullname in the 'textboxGwtDebugFormP..." },
  { l: 2, i: "click", t: "radiobuttonComReachcallFrontendC", op: "ClickButton", d: "Clicks the 'radiobuttonComReachcallFrontendC' radio button." },
  { l: 2, i: "click", t: "cell", op: "Click", v: "95, 6, ...", d: "Clicks at point (95, 6) of the 'cell' object." },
  { l: 2, i: "click", t: "panel", op: "Click", v: "118, 7, ...", d: "Clicks at point (118, 7) of the 'panel' object." },
  { l: 2, i: "click", t: "textboxGwtDebugFormDateofbirth", op: "Click", v: "39, 14, ...", d: "Clicks at point (39, 14) of the 'textboxGwtDebugFormDateofbirth' object." },
  { l: 2, i: "keycap", t: "textboxGwtDebugFormDateofbirth", op: "Keys", v: "Project.Variables.PatientDOB", d: "Enters Project.Variables.PatientDOB in the 'textboxGwtDebugFormDateo..." },
  { l: 2, i: "click", t: "textboxGwtDebugFormRoombed", op: "Click", v: "28, 7, ...", d: "Clicks at point (28, 7) of the 'textboxGwtDebugFormRoombed' object." },
  { l: 2, i: "keycap", t: "textboxGwtDebugFormRoombed", op: "Keys", v: "\"R1B1\"", d: "Enters 'R1B1' in the 'textboxGwtDebugFormRoombed' object." },
  { l: 2, i: "click", t: "textboxGwtDebugFormMedicalrecord", op: "Click", v: "39, 12, ...", d: "Clicks at point (39, 12) of the 'textboxGwtDebugFormMedicalrecord' object." },
  { l: 2, i: "click", t: "checkbox", op: "ClickChecked", v: "true", d: "Sets the state of the 'checkbox' checkbox to True." },
  { l: 2, i: "drag", t: "textareaGwtDebugConsulttypedetai", op: "Drag", v: "66, 41, 5, 3, ...", d: "Drags from point (66, 41) of the 'textareaGwtDebugConsulttypedetai' ob..." },
  { l: 2, i: "keycap", t: "textareaGwtDebugConsulttypedetai", op: "Keys", v: "\"Reason for consult\"", d: "Enters 'Reason for consult' in the 'textareaGwtDebugConsulttypedetai' o..." },
  { l: 2, i: "click", t: "buttonGwtDebugFormSubmitbtn", op: "ClickButton", d: "Clicks the 'buttonGwtDebugFormSubmitbtn' button." },
  { l: 2, i: "click", t: "imageStaticresourcedownloadservi", op: "Click", v: "85, 28, ...", d: "Clicks at point (85, 28) of the 'imageStaticresourcedownloadservi' object." },
  { l: 0, i: "runDoc", t: "Run Script Routine", op: "Library - CloseBrowser", d: "Runs a script routine.", dim: true },
  { l: 0, i: "chrome", t: "Navigate", op: "Chrome", v: "\"http://testlocation.dev03.reachcorp.local/frontend/\", ...", d: "Opens the specified URL in a running instance of the specified browser.", dim: true },
  { l: 0, x: "-", i: "globe", t: "browser" },
  { l: 1, x: "-", i: "chrome", t: "pageHttpTestlocationDev03Reachco" },
  { l: 2, i: "click", t: "panel", op: "Click", v: "9, 98, ...", d: "Clicks at point (9, 98) of the 'panel' object.", sel: true },
  { l: 2, i: "click", t: "panel", op: "Click", v: "1864, 163", d: "Clicks at point (1864, 163) of the 'panel' object." },
  { l: 2, i: "click", t: "panel", op: "Click", v: "5, 107", d: "Clicks at point (5, 107) of the 'panel' object." },
  { l: 2, i: "click", t: "panel", op: "Click", v: "8, 52", d: "Clicks at point (8, 52) of the 'panel' object." },
  { l: 2, i: "click", t: "panel", op: "Click", v: "7, 100", d: "Clicks at point (7, 100) of the 'panel' object." },
  { l: 2, i: "click", t: "panel", op: "Click", v: "4, 89", d: "Clicks at point (4, 89) of the 'panel' object." },
  { l: 2, i: "click", t: "imageStaticresourcedownloadservi2", op: "Click", v: "75, 26", d: "Clicks at point (75, 26) of the 'imageStaticresourcedownloadservi2' object." },
];

const GripBar = () => <i className="-mx-px h-5 w-0 shrink-0 border-l-2 border-dotted border-[#a9afc4]" />;
const Sep = () => <i className="-mx-px h-5 w-px shrink-0 bg-[#8b8f9c]" />;
const More = () => <i className="-mx-px mt-3 shrink-0 border-x-3 border-t-3 border-x-transparent border-t-black" />;
const Caret = () => <i className="shrink-0 border-x-4 border-t-4 border-x-transparent border-t-[#777]" />;

const winBtn = "flex h-[14px] w-6 items-center justify-center rounded-xs border border-[#8496b8] bg-linear-to-b from-[#e6edf6] to-[#c3d1e4] text-[11px] leading-[12px] font-bold text-[#555]";
const bar = "bg-linear-to-b from-[#f6f8fd] via-[#d3d9ec] via-40% to-[#dfe4f4]";
const btab = "flex items-center border-r border-b border-[#868a94] bg-linear-to-b from-[#d6d6d6] to-[#f2f2f2] px-1 whitespace-nowrap";
const lowTab = "h-[18px] border border-b-0 border-[#868a94] bg-linear-to-b from-[#f2f2f2] to-[#dcdcdc] px-[7px]";
const headGrad = "bg-linear-to-b from-[#b9c9d8] to-[#d5e2ef] text-[#5a6470]";

function TitleButtons() {
  return (
    <div className="mr-1 ml-auto flex items-center gap-[7px]">
      <button aria-label="Help" className={winBtn}>?</button>
      <Pin className="size-3 text-[#888]" strokeWidth={2.5} />
      <button aria-label="Close" className={winBtn}><X className="size-3" strokeWidth={3} /></button>
    </div>
  );
}

function ProjectExplorer() {
  return (
    <div className="flex w-[217px] shrink-0 flex-col bg-[#efefef] pb-1.5">
      <div className="mt-[3px] flex flex-1 flex-col border border-[#868a94] bg-white p-0.5">
        <div className={`flex h-[22px] items-center pl-1 ${headGrad}`}>
          <Ic k="explorer" /><span className="ml-1 whitespace-nowrap">Project Explorer</span><TitleButtons />
        </div>
        <div className={`flex h-7 items-center gap-2 pl-1 ${bar}`}>
          <GripBar /><Ic k="docGray" /><Ic k="docGray" /><Ic k="docGray" /><Sep /><Ic k="doc" /><Sep /><Ic k="stopDoc" /><Ic k="stopDoc" /><More />
        </div>
        <ul className="flex-1 border border-[#868a94]">
          {tree.map((n, i) => (
            <li key={i} className="flex h-[19px] items-center">
              <Guides nodes={tree} at={i} top={false} />
              <Ic k={n.i} />
              <span className={`flex h-[19px] items-center whitespace-nowrap ${n.sel ? "flex-1 border border-dotted border-black bg-[#efefef] px-0.5" : n.b ? "px-[3px] font-bold" : "px-[3px]"}`}>{n.t}</span>
            </li>
          ))}
        </ul>
      </div>
      <div className="flex h-[18px]">
        <button className="flex items-center border-r border-b border-l border-[#868a94] bg-white px-1 whitespace-nowrap">Project Explorer</button>
        <button className={`${btab} mb-0.5`}>Code Explorer</button>
      </div>
    </div>
  );
}

const actions: [string, string][] = [
  ["screen", "On-Screen Action"], ["app", "Run TestedApp"], ["menu", "Menu Action"], ["process", "Process Action"],
  ["runKey", "Run Keyword Test"], ["runDoc", "Run Script Routine"], ["runDoc", "Run Test"], ["snippet", "Run Code Snippet"],
  ["box", "Call Object Method"], ["find", "Find Object"], ["ifobj", "If Object"], ["loop", "Data-Driven Loop"],
];

function Category({ children }: { children: ReactNode }) {
  return <button className="h-[17px] w-full border-b border-[#cdd0d4] bg-linear-to-b from-white to-[#f0f1f3] pl-1.5 text-left">{children}</button>;
}

function Operations() {
  return (
    <div className="flex w-[150px] shrink-0 flex-col">
      <div className={`flex h-[19px] items-center justify-between pr-2.5 pl-1 ${headGrad}`}>Operations<Pin className="size-3.5" strokeWidth={2.5} /></div>
      <div className="flex h-[27px] items-center">
        <input aria-label="Search" placeholder="Search" className="w-[114px] pl-1 italic placeholder:text-[#444]" />
        <svg viewBox="0 0 16 16" className="size-4" fill="none" aria-hidden="true"><circle cx="10" cy="6" r="4" stroke="#2a62c8" strokeWidth="2" /><path d="M7 9l-5 6" stroke="#173f8f" strokeWidth="2.5" /></svg>
        <button aria-label="Options" className="ml-0.5 flex h-4 w-3.5 items-center justify-center rounded-xs border border-[#aaa]"><Caret /></button>
      </div>
      <div className="flex flex-1 flex-col border border-[#868a94] p-px">
        <Category>Frequently Used</Category><Category>Test Actions</Category>
        <ul className="mt-px">
          {actions.map(([i, t]) => (
            <li key={t} className="flex h-[23px] items-center gap-1 pl-1.5"><Ic k={i} />{t}</li>
          ))}
        </ul>
        <div className="mt-auto">
          {["Logging", "Web", "Checkpoints", "Statements", "Miscellaneous"].map((c) => <Category key={c}>{c}</Category>)}
        </div>
      </div>
    </div>
  );
}

const cell = "overflow-hidden p-0 pl-0.5 whitespace-nowrap";
const head = "border-b border-[#cdd0d4] p-0 pl-0.5 font-normal";

function StepsTable() {
  return (
    <div className="flex flex-1 border border-[#868a94] bg-white">
      <div className="min-w-0 flex-1 pb-3.5">
        <table className="w-full table-fixed border-collapse text-left font-['Liberation_Sans',sans-serif] text-[11px]">
          <colgroup><col className="w-[25px]" /><col className="w-[369px]" /><col className="w-[368px]" /><col className="w-[369px]" /><col /></colgroup>
          <thead>
            <tr className="h-[19px] bg-linear-to-b from-white to-[#eff1f3]">
              <th className={head} aria-label="State" />
              <th className={head}>Item</th>
              <th className={`${head} border-l`}>Operation</th>
              <th className={`${head} border-l`}>Value</th>
              <th className={`${head} border-l`}>Description</th>
            </tr>
          </thead>
          <tbody>
            {steps.map((s, i) => {
              const short = i === 19 || i === 20;
              const sel = s.sel ? "border-y border-dotted border-[#c8782a] bg-[#3399ff] text-white" : "";
              return (
                <tr key={i} className={`${short ? "h-[17px]" : "h-[19px]"} ${s.dim ? "text-[#7a7a7a]" : ""}`}>
                  <td className="border-r border-b border-[#8f8f8f] bg-[#ededed] p-0">
                    {s.sel && <svg viewBox="0 0 8 16" className="mx-auto block h-4 w-2" aria-label="Current step"><path d="M0 0l8 8-8 8z" fill="#2fae3c" stroke="#0f6a1c" /></svg>}
                  </td>
                  <td className="p-0">
                    <div className={`flex items-center ${short ? "h-[17px]" : "h-[19px]"}`}>
                      <Guides nodes={steps} at={i} h={short ? 17 : 19} />
                      <Ic k={s.i} />
                      <span className={s.sel ? "ml-0.5 flex h-[19px] flex-1 items-center border-y border-dotted border-[#ffff55] bg-[#0000ff] pl-px text-white" : "pl-[3px]"}>{s.t}</span>
                    </div>
                  </td>
                  <td className={`${cell} ${sel}`}>{s.op}</td>
                  <td className={`${cell} ${sel}`}>{s.v}</td>
                  <td className={`${cell} ${sel}`}>{s.d}</td>
                </tr>
              );
            })}
          </tbody>
        </table>
      </div>
      <div className="flex w-4 flex-col items-center bg-[#f2f2f2] py-2">
        <i className="border-x-4 border-b-4 border-x-transparent border-b-[#444]" />
        <div className="mt-auto flex h-[431px] w-3.5 flex-col items-center justify-center gap-0.5 rounded-sm border border-[#9a9a9a] bg-linear-to-r from-[#f6f6f6] to-[#c8c8c8]">
          <i className="h-px w-2 bg-[#666]" /><i className="h-px w-2 bg-[#666]" /><i className="h-px w-2 bg-[#666]" />
        </div>
        <i className="mt-2 border-x-4 border-t-4 border-x-transparent border-t-[#444]" />
      </div>
    </div>
  );
}

const docTabs: { i: string; t: string; w: string; on?: boolean }[] = [
  { i: "bulb", t: "Start Page", w: "w-[103px]" }, { i: "doc", t: "Library", w: "w-[85px]" },
  { i: "logTab", t: "Keyword Test Log [Test1] 11/5/20...", w: "w-[229px]" }, { i: "doc", t: "Library", w: "w-[84px]" },
  { i: "suite", t: "ProjectSuite2", w: "w-[117px]" }, { i: "doc", t: "TC_Patient_reg", w: "w-[124px]" },
  { i: "key", t: "TC_Patient_reg", w: "w-[130px]", on: true }, { i: "key", t: "Test3", w: "w-[79px]" },
  { i: "key", t: "Tab_test", w: "w-[95px]" }, { i: "nm", t: "NameMapping", w: "w-[117px]" },
];

function Workspace() {
  return (
    <div className="flex min-w-0 flex-1 flex-col bg-[#efefef] pb-1.5">
      <div className="mt-0.5 flex h-[22px] items-center bg-linear-to-b from-[#9ab4d2] to-[#b5cee8] pl-1">
        <Ic k="pen" /><span className="ml-1">Workspace</span>
        <div className="mr-1 ml-auto flex gap-px">
          <button aria-label="Help" className={winBtn}>?</button>
          <button aria-label="Restore" className={winBtn}>▫</button>
          <button aria-label="Close" className="flex h-[14px] w-6 items-center justify-center rounded-xs border border-[#7a2020] bg-[#c85a50] text-white"><X className="size-3" strokeWidth={3} /></button>
        </div>
      </div>
      <div className="flex h-[25px] items-end pl-0.5">
        {docTabs.map((d, i) => (
          <button key={i} className={`flex items-center border border-b-0 border-[#868a94] px-[3px] ${d.w} ${d.on ? "z-10 -mb-px h-[23px] bg-white" : "h-5 bg-linear-to-b from-[#f2f2f2] to-[#d3d3d3]"}`}>
            <Ic k={d.i} /><span className="flex-1 pl-1.5 text-left whitespace-nowrap">{d.t}</span><X className="size-2.5 text-[#888]" strokeWidth={4} />
          </button>
        ))}
        <button aria-label="More tabs" className="mr-0.5 mb-[3px] ml-auto flex h-[17px] w-[17px] items-center justify-center border border-[#555]"><i className="border-x-4 border-t-4 border-x-transparent border-t-black" /></button>
      </div>
      <div className="mr-[3px] flex flex-1 flex-col border border-b-0 border-[#868a94] bg-white px-[3px] pt-0.5">
        {/* keyword test editor */}
        <div className="flex gap-1 border border-[#868a94] p-0.5 pb-[3px]">
          <Operations />
          <div className="flex min-w-0 flex-1 flex-col bg-[#efefef]">
            <div className={`flex h-7 items-center gap-2 pl-1 text-[12px] text-[#8a8a8a] ${bar}`}>
              <GripBar />
              <button className="flex items-center gap-1"><Ic k="rec" />Record New Test</button>
              <button className="flex items-center gap-1"><Ic k="rec" />Append to Test</button>
              <button className="flex items-center gap-1"><Ic k="play" />Run Test</button><Sep />
              <button className="flex items-center gap-1"><Ic k="tag" />Add Variable</button>
              <button className="flex items-center gap-1"><Ic k="tag" />Add Parameter</button><Sep />
              <ArrowUp className={g} strokeWidth={4} /><ArrowDown className={g} strokeWidth={4} /><ArrowLeft className={g} strokeWidth={4} /><ArrowRight className={g} strokeWidth={4} /><Sep />
              <Ic k="note" />
            </div>
            <div className="mt-[3px] flex flex-1"><StepsTable /></div>
          </div>
        </div>
        <div className="-mx-[3px] flex h-[29px] items-start bg-[#efefef] pl-[3px]">
          <button className="flex h-[21px] items-center gap-1 border-r border-b border-l border-[#868a94] bg-white px-1.5"><Ic k="key" />Test Steps</button>
          <button className={`${btab} h-[19px] gap-1`}><Ic k="y1" s="size-3.5" />Variables</button>
          <button className={`${btab} h-[19px] gap-1`}><Ic k="param" />Parameters</button>
        </div>
        <div className={`-mx-0.5 flex h-[22px] items-center pl-1 ${headGrad}`}>
          <Ic k="visual" /><span className="ml-1.5">Test Visualizer</span>
          <button aria-label="Restore" className={`${winBtn} mr-1 ml-auto`}><Copy className="size-2.5" strokeWidth={3} /></button>
        </div>
        <div className="-mx-1 mt-0.5 h-1.5 border-t border-b border-[#868a94] bg-white" />
        <div className={`-mx-0.5 mt-0.5 flex h-[22px] items-center pl-1 ${headGrad}`}>
          <Ic k="winStack" s="size-3.5" /><span className="ml-1.5">Call Stack</span><TitleButtons />
        </div>
        <div className="-mx-px mb-[3px] flex-1 border border-[#868a94] bg-white">
          <div className="flex h-[18px] items-center border-b border-[#cdd0d4] bg-linear-to-b from-white to-[#eff1f3] pt-0.5 pl-0.5">Call Stack</div>
        </div>
      </div>
      <div className="mr-[3px] flex h-[18px] items-start border-t border-[#868a94]">
        <button className="-mt-px flex h-[18px] items-center border-r border-b border-l border-[#868a94] bg-white px-[5px]">Call Stack</button>
        {["Locals", "Watch List", "Breakpoints"].map((t) => <button key={t} className={`${btab} h-4`}>{t}</button>)}
      </div>
    </div>
  );
}

function RunWidget() {
  const b = "flex h-[22px] w-[22px] items-center justify-center rounded border border-[#8d8676] bg-linear-to-b from-[#eeeae0] to-[#b3ac9b]";
  return (
    <div className="absolute top-6 right-[18px] z-20">
      <div className="flex h-[41px] w-[104px] overflow-hidden rounded border border-[#9a958a] bg-white">
        <div className="flex w-10 items-center justify-center border-r border-[#9a958a] bg-linear-to-b from-[#e2e2e2] to-[#bcbcbc]"><TcLogo s="size-8" /></div>
        <div className="flex flex-1 items-center justify-center gap-[3px]">
          <button aria-label="Pause" className={b}><i className="h-2 w-2 border-x-3 border-[#444]" /></button>
          <button aria-label="Stop" className={b}><i className="size-2 bg-[#444]" /></button>
        </div>
      </div>
      <div className="mt-[3px] ml-auto w-20 rounded border border-[#77797e] bg-linear-to-b from-white to-[#e6e9f4] px-1 pt-[3px] pb-1.5 text-right">
        <div className="border-b border-black pr-0.5 pb-0.5 leading-[15px]">Stopping...</div>
        <div className="leading-4">TestProject2</div>
      </div>
    </div>
  );
}

const menus: [string, string, string][] = [["", "F", "ile"], ["", "E", "dit"], ["", "V", "iew"], ["Te", "s", "t"], ["", "D", "ebug"], ["", "T", "ools"], ["", "H", "elp"]];

function Taskbar() {
  const app = "flex h-[38px] w-[58px] items-center justify-center rounded-xs border border-[#a9bbdf] bg-linear-to-b from-[#7f97c8] to-[#34559c]";
  return (
    <div className="flex h-10 items-center border-t border-[#6d86b8] bg-linear-to-r from-[#1f3f86] from-40% via-[#30569f] via-75% to-[#1d3a78] to-88%">
      <button aria-label="Start" className="mr-7 ml-2">
        <svg viewBox="0 0 38 38" className="size-[38px]" aria-hidden="true"><circle cx="19" cy="19" r="18" fill="#2d73a8" stroke="#8fc0dd" /><ellipse cx="19" cy="10" rx="14" ry="8" fill="#a9d0e4" opacity=".6" /><path d="M10 12q4-3 8-1v8q-4-2-8 1z" fill="#e8592a" /><path d="M20 11q4 2 8-1v8q-4 3-8 1z" fill="#84bb3c" /><path d="M9 21q4-3 8-1v8q-4-2-8 1z" fill="#3a92dc" /><path d="M19 21q4 2 8-1v8q-4 3-8 1z" fill="#f6c52c" /></svg>
      </button>
      <button aria-label="Internet Explorer" className="mr-[18px]">
        <svg viewBox="0 0 32 32" className="size-[30px]" fill="none" aria-hidden="true"><path d="M7 17h18a9 9 0 10-2 6" stroke="#4fb4ee" strokeWidth="5" /><path d="M28 3c-5-3-14 3-20 11S2 30 6 30" stroke="#f6c52c" strokeWidth="2.5" /></svg>
      </button>
      <div className="flex gap-1">
        <button aria-label="Explorer" className={app}><svg viewBox="0 0 32 30" className="h-[30px] w-8" aria-hidden="true"><path d="M2 3h10l2 3h16v22H2z" fill="#f4dd8c" stroke="#b8923a" /><path d="M4 1h5v3H4z" fill="#3fae2e" /><path d="M12 3h5v3h-5z" fill="#d9232b" /><path d="M20 5h6v3h-6z" fill="#3a92dc" /><path d="M6 29V18h22v11h-5v-6H11v6z" fill="#9bd4ef" stroke="#4d9cc4" /></svg></button>
        <button aria-label="Chrome" className={app}><Ic k="chrome" s="size-7" /></button>
        <button aria-label="Outlook" className={app}><svg viewBox="0 0 32 32" className="size-[30px]" aria-hidden="true"><path d="M2 1h28v29H2z" fill="#f5a81c" stroke="#fde3a0" strokeWidth="2" /><ellipse cx="11" cy="13" rx="6" ry="8" fill="none" stroke="#fff" strokeWidth="4" /><path d="M12 20h16v9H12z" fill="#fff6dc" stroke="#c98714" /><circle cx="24" cy="13" r="5" fill="#fff" stroke="#c98714" /></svg></button>
        <button aria-label="Snipping Tool" className="flex w-[58px] items-center justify-center"><svg viewBox="0 0 32 32" className="size-[30px]" fill="none" aria-hidden="true"><ellipse cx="14" cy="9" rx="11" ry="8" fill="#fff" stroke="#d9232b" strokeWidth="2.5" /><path d="M6 17L22 8M12 4l10 18" stroke="#b9c4d4" strokeWidth="2.5" /><circle cx="19" cy="26" r="4" stroke="#3f82e0" strokeWidth="2.5" /><circle cx="27" cy="21" r="4" stroke="#3f82e0" strokeWidth="2.5" /></svg></button>
        <button aria-label="Notepad" className={app}><svg viewBox="0 0 32 32" className="size-[30px]" aria-hidden="true"><path d="M8 3l20 1-3 26L2 25z" fill="#7fcbd8" stroke="#e8f6f8" strokeWidth="1.5" /><path d="M2 25l20 2 3 3-4-1z" fill="#fff" /><path d="M9 2v4M13 2v4M17 2v4M21 2v4M25 3v4" stroke="#ddd" strokeWidth="1.5" /></svg></button>
        <button aria-label="TestComplete" className="flex h-[38px] w-[58px] items-center justify-center rounded-xs border border-white bg-linear-to-br from-[#dfe7f4] to-[#9fb3d8]"><TcLogo s="size-8" /></button>
      </div>
      <div className="ml-auto flex items-center gap-2 text-white">
        <svg viewBox="0 0 16 16" className="size-4" aria-hidden="true"><path d="M0 1h16L8 16z" fill="#b8b3a8" /><path d="M4 2l4 8 4-8" fill="none" stroke="#fff" strokeWidth="2" /></svg>
        <svg viewBox="0 0 16 16" className="size-4" aria-hidden="true"><path d="M4 0h10v15H4z" fill="#9cc8ee" /><path d="M6 3h3v3H6z" fill="#e8592a" /><path d="M10 3h3v3h-3z" fill="#84bb3c" /><path d="M2 13C0 9 6 4 15 5" stroke="#f0a030" strokeWidth="2" fill="none" /></svg>
        <svg viewBox="0 0 16 16" className="size-4" aria-hidden="true"><path d="M1 1h14v14H1z" fill="#f5b01c" stroke="#fde3a0" /><ellipse cx="8" cy="8" rx="3" ry="4" fill="none" stroke="#fff" strokeWidth="2.5" /></svg>
        <svg viewBox="0 0 16 16" className="size-4" aria-hidden="true"><path d="M1 1h14v9H9l-2 5-1-5H1z" fill="#f4f4f4" /><path d="M3 9V3l5 4 5-4v6" fill="none" stroke="#d9232b" strokeWidth="2" /></svg>
        <svg viewBox="0 0 16 16" className="size-4" aria-hidden="true"><circle cx="8" cy="8" r="7.5" fill="#d8ead8" /><path d="M3 10a5 5 0 019-5M13 6a5 5 0 01-9 6" stroke="#2f8f46" strokeWidth="2" fill="none" /></svg>
        <svg viewBox="0 0 16 16" className="size-4" fill="none" stroke="#fff" strokeWidth="1.5" aria-hidden="true"><path d="M2 3h7v12H2zM4 1h3M9 6h6v3h-6zM11 3v3M14 3v3M12 9v5" /></svg>
        <svg viewBox="0 0 16 16" className="size-4" aria-hidden="true"><path d="M0 12h2v3H0zM3 10h2v5H3zM6 8h2v7H6zM9 5h2v10H9zM12 2h2v13h-2z" fill="#fff" /></svg>
        <svg viewBox="0 0 16 16" className="size-4" aria-hidden="true"><path d="M0 5h3l4-4v14l-4-4H0z" fill="#fff" /><circle cx="11" cy="11" r="4.5" fill="#d9232b" /><path d="M8 8l6 6" stroke="#fff" strokeWidth="1.5" /></svg>
        <div className="ml-1.5 w-16 text-center text-[12px] leading-[17px]">2:42 PM<br />11/6/2013</div>
        <button aria-label="Show desktop" className="h-10 w-3.5 border-l border-[#7f97c8] bg-linear-to-b from-[#7f97c8] to-[#2a4884] to-40%" />
      </div>
    </div>
  );
}

function TestComplete() {
  return (
    <div className="relative flex min-h-screen min-w-0 flex-1 flex-col overflow-hidden bg-white font-['DejaVu_Sans_Condensed','DejaVu_Sans',sans-serif] text-[11px] text-black">
      <div className="flex h-[22px] items-center border-b border-[#27365c] bg-linear-to-r from-[#93a9cb] from-27% via-[#1f4189] via-34% to-[#6b98d0] to-80%">
        <TcLogo s="size-[17px]" />
        <span className="ml-1 text-[12px] whitespace-nowrap">TestComplete - C:\Users\murali.velaga\Documents\TestComplete 9 Projects\ProjectSuite2\ProjectSuite2.pjs</span>
        <div className="mr-1 ml-auto flex self-start overflow-hidden rounded-b border border-t-0 border-[#27365c]">
          <button aria-label="Minimize" className="flex h-[17px] w-7 items-center justify-center bg-[#8fb0dc]"><i className="mt-1.5 h-1 w-3 border border-[#555] bg-white" /></button>
          <button aria-label="Restore" className="flex h-[17px] w-[27px] items-center justify-center border-x border-[#27365c] bg-[#8fb0dc]"><Copy className="size-3 text-white" strokeWidth={3} /></button>
          <button aria-label="Close" className="flex h-[17px] w-[46px] items-center justify-center bg-linear-to-b from-[#e09a8c] to-[#b8301c]"><X className="size-3.5 text-white" strokeWidth={4} /></button>
        </div>
      </div>
      <RunWidget />
      <nav className={`flex h-[25px] items-center border-b border-[#9aa0b0] pl-1 ${bar}`}>
        <GripBar />
        <div className="ml-2.5 flex gap-3">
          {menus.map(([a, u, c]) => <button key={u + c}>{a}<u>{u}</u>{c}</button>)}
        </div>
        <span className="ml-2.5"><More /></span>
      </nav>
      <div className={`flex h-7 items-center gap-2 border-b border-[#b4bad0] pl-1 ${bar}`}>
        <GripBar /><button className="flex items-center gap-1 pl-0.5"><span><u>N</u>ew</span><i className="border-x-3 border-t-3 border-x-transparent border-t-black" /></button><Sep />
        <FolderOpen className={g} strokeWidth={3} /><CornerUpLeft className={g} strokeWidth={3} /><Sep /><Ic k="save" /><More />
        <GripBar /><Undo2 className={g} strokeWidth={3} /><Redo2 className={g} strokeWidth={3} /><Sep />
        <Scissors className={g} strokeWidth={2.5} /><Copy className="size-4 shrink-0 text-[#3f78d0]" strokeWidth={2.5} /><ClipboardPaste className={g} strokeWidth={3} /><X className={g} strokeWidth={2.5} /><More />
        <GripBar /><FileText className={g} strokeWidth={3} /><Target className={g} strokeWidth={2.5} /><ClipboardCheck className={g} strokeWidth={3} /><Caret /><Ic k="camera" /><Film className={g} strokeWidth={3} /><More />
        <GripBar /><Ic k="rec" /><Caret /><Ic k="play" />
        <button className="flex items-center gap-1.5"><i className="size-[13px] bg-[#1565cc]" />Stop</button>
        <button aria-label="Log" className="-ml-1 flex h-[22px] w-6 items-center justify-center rounded border border-[#555c70] bg-[#c4cadc]"><Ic k="toggle" /></button><More />
        <GripBar /><svg viewBox="0 0 12 12" className="size-3 shrink-0" aria-hidden="true"><path d="M0 0h4v12H0zM7 0h4v12H7z" fill="#f08a24" /></svg><Sep />
        <IndentIncrease className={g} /><IndentIncrease className={g} /><IndentIncrease className={g} /><Sep />
        <Calculator className={g} strokeWidth={3} /><Sep />
        <Ic k="winRed" /><Ic k="winBin" /><Ic k="winPen" /><Ic k="winStack" /><More />
      </div>
      <div className="flex h-[23px] items-end border-b border-[#868a94] bg-[#efefef]">
        <button className="-mb-px h-5 border border-b-0 border-[#868a94] bg-white px-[7px]">Project Workspace</button>
        <button className="h-[18px] border border-b-0 border-l-0 border-[#868a94] bg-linear-to-b from-[#f2f2f2] to-[#d3d3d3] px-1.5">Object Browser</button>
      </div>
      <div className="mr-0.5 flex flex-1 gap-[7px] border-r border-b border-[#868a94] pr-0.5 pl-[3px]">
        <ProjectExplorer />
        <Workspace />
      </div>
      <div className="flex h-6 items-end border-b border-[#868a94] pl-px">
        <button disabled className={`${lowTab} text-[#999]`}>Bookmarks</button>
        <button disabled className={`${lowTab} text-[#999]`}>Search/Replace Results</button>
        <button className={lowTab}>To Do</button>
      </div>
      <div className="flex h-[19px] items-center border-t border-white bg-[#efecea] text-[#a5a5a5]">
        <i className="h-4 w-[54px] border-r border-[#d5d2d0]" /><i className="h-4 w-[54px] border-r border-[#d5d2d0]" />
        <span className="pl-0.5">CAPS</span><span className="px-2 text-black">NUM</span><span className="border-r border-[#d5d2d0] pr-1">SCRL</span>
        <i className="h-4 w-[34px] border-r border-[#d5d2d0]" />
      </div>
      <Taskbar />
      {/* mouse pointer over the step list */}
      <svg viewBox="0 0 12 20" className="pointer-events-none absolute top-[597px] left-[650px] h-5 w-3" aria-hidden="true"><path d="M1 1v15l3.500-3 2.500 6 2.500-1-2.500-6H11z" fill="#fff" stroke="#000" /></svg>
    </div>
  );
}

export default function App() {
  return (
    <div className="flex min-h-screen overflow-hidden">
      <Browser />
      <TestComplete />
    </div>
  );
}
